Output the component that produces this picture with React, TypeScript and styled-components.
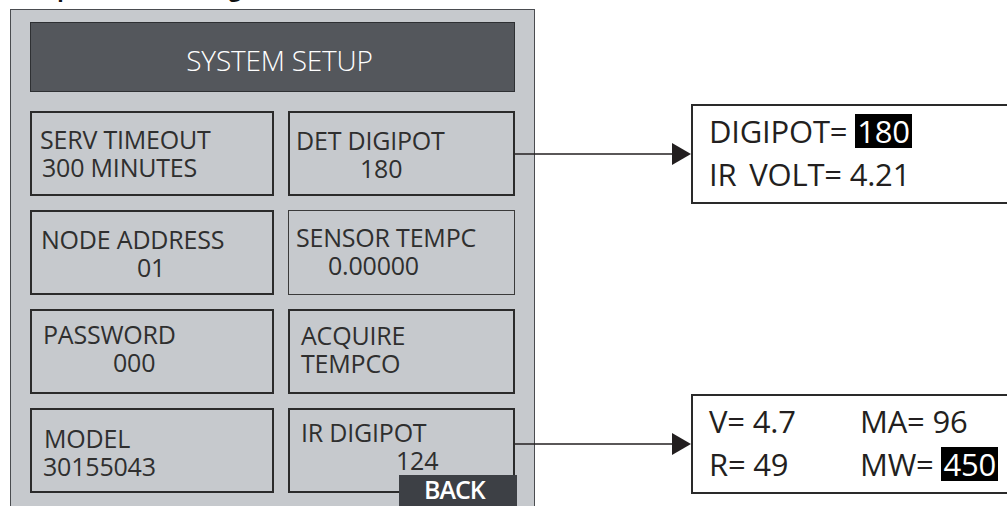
import React from 'react';
import styled, { createGlobalStyle } from 'styled-components';

const GlobalStyle = createGlobalStyle`
  html, body {
    margin: 0;
    height: 100%;
    overflow: hidden;
    background: #fff;
  }
  body {
    font-family: "Open Sans", "Liberation Sans", sans-serif;
    color: #2f2f2f;
  }
`;

const Page = styled.div`
  width: 1007px;
  height: 506px;
  padding-left: 10px;
  box-sizing: border-box;
`;

// heading of the manual page, only its bottom edge is still in the shot
const Caption = styled.div`
  height: 9px;
  margin-left: -10px;
  overflow: hidden;
`;

const CaptionText = styled.span`
  display: block;
  margin-top: -23px;
  font: 700 21px/24px "Open Sans", sans-serif;
  color: #111;
  white-space: nowrap;
`;

const Panel = styled.section`
  width: 525px;
  box-sizing: border-box;
  background: #c6c9cd;
  border: 1px solid #4a4c50;
  border-bottom: none;
  padding: 12px 19px 40px;
`;

const TitleBar = styled.div`
  height: 70px;
  box-sizing: border-box;
  background: #54575c;
  border: 1px solid #2e3033;
  display: flex;
  align-items: center;
  justify-content: center;
  padding: 5px 0 0 14px;
  color: #fff;
  font-size: 28px;
  font-weight: 300;
  letter-spacing: -0.2px;
`;

const Grid = styled.div`
  margin-top: 19px;
  display: grid;
  grid-template-columns: 244px 227px;
  grid-auto-rows: 85px;
  column-gap: 14px;
  row-gap: 14px;
`;

const Box = styled.div<{ $top: number; $thin?: boolean }>`
  position: relative;
  box-sizing: border-box;
  border: ${p => (p.$thin ? '1px solid #3a3a3a' : '2px solid #2b2b2b')};
  padding-top: ${p => p.$top}px;
  font-size: 25px;
  line-height: 28px;
  letter-spacing: -0.2px;
  white-space: nowrap;
`;

const Line = styled.div<{ $indent: number }>`
  padding-left: ${p => p.$indent}px;
`;

const BackButton = styled.div`
  position: absolute;
  left: 109px;
  top: 65px;
  width: 118px;
  height: 34px;
  box-sizing: border-box;
  padding-left: 25px;
  background: #3d4045;
  color: #fff;
  font-size: 25px;
  font-weight: 600;
  line-height: 28px;
  letter-spacing: -1px;
`;

const Connector = styled.div<{ $y: number }>`
  position: absolute;
  left: 100%;
  margin-left: 2px;
  top: ${p => p.$y}px;
  transform: translateY(-50%);
  display: flex;
  align-items: center;
`;

const Callout = styled.div`
  width: 340px;
  box-sizing: border-box;
  background: #fff;
  border: 2px solid #2a2a2a;
  padding: 4px 0 6px 16px;
  color: #231f20;
  font-size: 31px;
  line-height: 43px;
  white-space: nowrap;
`;

const CalloutGrid = styled.div`
  display: grid;
  grid-template-columns: 151px auto;
`;

const Mark = styled.span`
  display: inline-block;
  background: #000;
  color: #fff;
  line-height: 34px;
  padding: 0 2px;
`;

function Arrow() {
  return (
    <svg width="176" height="22" viewBox="0 0 176 22">
      <line x1="0" y1="11" x2="160" y2="11" stroke="#231f20" strokeWidth="1.6" />
      <polygon points="157,0 176,11 157,22" fill="#231f20" />
    </svg>
  );
}

type Setting = {
  lines: [string, number][];
  top: number;
  thin?: boolean;
};

const settings: Setting[] = [
  { lines: [['SERV TIMEOUT', 8], ['300 MINUTES', 10]], top: 12 },
  { lines: [['DET DIGIPOT', 6], ['180', 70]], top: 13 },
  { lines: [['NODE ADDRESS', 9], ['01', 105]], top: 13 },
  { lines: [['SENSOR TEMPC', 7], ['0.00000', 39]], top: 12, thin: true },
  { lines: [['PASSWORD', 11], ['000', 81]], top: 9 },
  { lines: [['ACQUIRE', 11], ['TEMPCO', 11]], top: 10 },
  { lines: [['MODEL', 12], ['30155043', 11]], top: 14 },
  { lines: [['IR DIGIPOT', 11], ['124', 106]], top: 8 },
];

export default function App() {
  return (
    <>
      <GlobalStyle />
      <Page>
        <Caption>
          <CaptionText>Example of LCD settings:</CaptionText>
        </Caption>
        <Panel>
          <TitleBar>SYSTEM SETUP</TitleBar>
          <Grid>
            {settings.map((s, i) => (
              <Box key={i} $top={s.top} $thin={s.thin}>
                {s.lines.map(([text, indent]) => (
                  <Line key={text} $indent={indent}>{text}</Line>
                ))}
                {i === 1 && (
                  <Connector $y={41}>
                    <Arrow />
                    <Callout>
                      <div>DIGIPOT= <Mark>180</Mark></div>
                      <div>IR{' \u2009'}VOLT= 4.21</div>
                    </Callout>
                  </Connector>
                )}
                {i === 7 && (
                  <>
                    <BackButton>BACK</BackButton>
                    <Connector $y={34}>
                      <Arrow />
                      <Callout>
                        <CalloutGrid>
                          <div>V= 4.7</div>
                          <div>MA= 96</div>
                          <div>R= 49</div>
                          <div>MW= <Mark>450</Mark></div>
                        </CalloutGrid>
                      </Callout>
                    </Connector>
                  </>
                )}
              </Box>
            ))}
          </Grid>
        </Panel>
      </Page>
    </>
  );
}
